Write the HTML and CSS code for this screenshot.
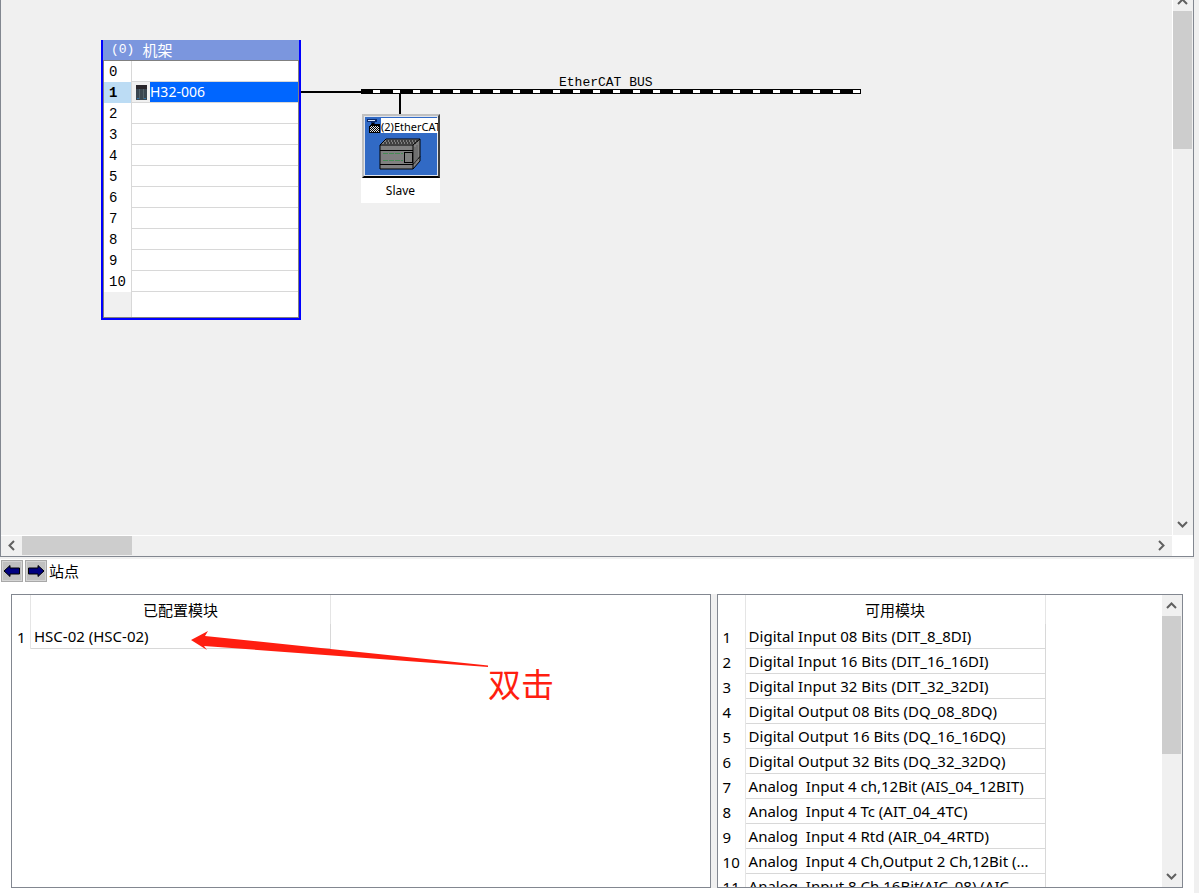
FILE: index.html
```
<!DOCTYPE html>
<html lang="zh-CN">
<head>
  <meta charset="UTF-8">
  <title>硬件配置</title>
  <meta name="viewport" content="width=device-width, initial-scale=1">
  <link rel="stylesheet" href="styles.css">
</head>
<body>
  <main class="window">
    <section class="workspace">
      <div class="canvas">
        <div class="rack">
          <div class="rack-title"><span class="mono">(0)</span><span>机架</span></div>
          <table class="slots">
            <tr><th>0</th><td></td></tr>
            <tr class="selected">
              <th>1</th>
              <td>
                <div class="slot">
                  <svg class="module-icon" width="11" height="15" viewBox="0 0 11 15">
                    <rect width="11" height="15" fill="#3a4650"/>
                    <rect width="11" height="4" fill="#29252a"/>
                    <path d="M3.500 4v10M7.500 4v10" stroke="#53626a"/>
                    <path d="M1 13.500h2M8 13.500h2" stroke="#2f74a8"/>
                  </svg>
                  <span class="slot-name">H32-006</span>
                </div>
              </td>
            </tr>
            <tr><th>2</th><td></td></tr>
            <tr><th>3</th><td></td></tr>
            <tr><th>4</th><td></td></tr>
            <tr><th>5</th><td></td></tr>
            <tr><th>6</th><td></td></tr>
            <tr><th>7</th><td></td></tr>
            <tr><th>8</th><td></td></tr>
            <tr><th>9</th><td></td></tr>
            <tr><th>10</th><td></td></tr>
            <tr class="rest"><th></th><td></td></tr>
          </table>
        </div>

        <div class="wire"></div>
        <div class="bus-name mono">EtherCAT BUS</div>
        <div class="bus"></div>
        <div class="stem"></div>

        <div class="slave">
          <div class="slave-box">
            <div class="slave-caption">
              <svg width="15" height="15" viewBox="0 0 15 15" shape-rendering="crispEdges">
                <rect width="15" height="15" fill="#316ac5"/>
                <path d="M1 1h10v3h-2v2H5V4H1z" fill="#0c2a6c"/>
                <path d="M2 2h7v1H2z" fill="#d8e4f8"/>
                <path d="M6 5h2v3H6z" fill="#000"/>
                <path d="M3 8l2-2h9v9H3z" fill="#000"/>
                <path d="M4 8h9v6H4z" fill="#e4e4e4"/>
                <path d="M4 8.500h9M5 9.500h8M4 10.500h9M5 11.500h8M4 12.500h9M5 13.500h8" stroke="#000" stroke-dasharray="1 1"/>
              </svg>
              <span>(2)EtherCAT</span>
            </div>
            <svg class="plc" width="42" height="32" viewBox="0 0 42 32">
              <path d="M1 7L7 1h34v22l-7 8H1z" fill="#808080" stroke="#000"/>
              <path d="M1 7h33v24M34 7l7-6M1 12.500h33M1 26.500h33l7-8" fill="none" stroke="#000"/>
              <path d="M7 3h32M5 5h32" stroke="#000" stroke-dasharray="2 1"/>
              <rect x="25.500" y="14.500" width="8" height="10" fill="#808080" stroke="#000"/>
              <path d="M4 15.500h20M4 22.500h20" stroke="#478c55" stroke-dasharray="5 1"/>
              <path d="M36 9v17M38 7v16" stroke="#5c5c5c"/>
            </svg>
          </div>
          <div class="slave-name">Slave</div>
        </div>
      </div>

      <div class="scroll-v scroll-canvas-v">
        <button class="arrow arrow-up" aria-label="向上"><svg width="11" height="7" viewBox="0 0 11 7"><path d="M1 6l4.500-4.500L10 6"/></svg></button>
        <div class="thumb"></div>
        <button class="arrow arrow-down" aria-label="向下"><svg width="11" height="7" viewBox="0 0 11 7"><path d="M1 1l4.500 4.500L10 1"/></svg></button>
      </div>
      <div class="scroll-h">
        <button class="arrow" aria-label="向左"><svg width="7" height="11" viewBox="0 0 7 11"><path d="M6 1L1.500 5.500L6 10"/></svg></button>
        <div class="thumb"></div>
        <button class="arrow arrow-right" aria-label="向右"><svg width="7" height="11" viewBox="0 0 7 11"><path d="M1 1l4.500 4.500L1 10"/></svg></button>
      </div>
    </section>

    <section class="station">
      <div class="toolbar">
        <button class="nav" aria-label="上一个"><svg width="18" height="14" viewBox="0 0 18 14"><path d="M1 7l6-5.500V4h9.500v6H7v2.500z" fill="#000080" stroke="#000"/></svg></button>
        <button class="nav" aria-label="下一个"><svg width="18" height="14" viewBox="0 0 18 14"><path d="M17 7l-6-5.500V4H1.500v6H11v2.500z" fill="#000080" stroke="#000"/></svg></button>
        <span class="toolbar-label">站点</span>
      </div>

      <div class="panels">
        <div class="panel configured">
          <table class="modules">
            <colgroup><col class="col-no-narrow"><col class="col-name"></colgroup>
            <thead><tr><th></th><th>已配置模块</th></tr></thead>
            <tbody><tr><th>1</th><td>HSC-02 (HSC-02)</td></tr></tbody>
          </table>
          <svg class="pointer" width="300" height="40" viewBox="0 0 300 40">
            <path d="M0 9L17 0L14 5L297 34.500V36L13 15L16 19z" fill="#ff1e10"/>
          </svg>
          <div class="note">双击</div>
        </div>

        <div class="panel available">
          <div class="list">
            <table class="modules">
              <colgroup><col class="col-no"><col class="col-name"></colgroup>
              <thead><tr><th></th><th>可用模块</th></tr></thead>
              <tbody>
                <tr><th>1</th><td>Digital Input 08 Bits (DIT_8_8DI)</td></tr>
                <tr><th>2</th><td>Digital Input 16 Bits (DIT_16_16DI)</td></tr>
                <tr><th>3</th><td>Digital Input 32 Bits (DIT_32_32DI)</td></tr>
                <tr><th>4</th><td>Digital Output 08 Bits (DQ_08_8DQ)</td></tr>
                <tr><th>5</th><td>Digital Output 16 Bits (DQ_16_16DQ)</td></tr>
                <tr><th>6</th><td>Digital Output 32 Bits (DQ_32_32DQ)</td></tr>
                <tr><th>7</th><td>Analog  Input 4 ch,12Bit (AIS_04_12BIT)</td></tr>
                <tr><th>8</th><td>Analog  Input 4 Tc (AIT_04_4TC)</td></tr>
                <tr><th>9</th><td>Analog  Input 4 Rtd (AIR_04_4RTD)</td></tr>
                <tr><th>10</th><td>Analog  Input 4 Ch,Output 2 Ch,12Bit (...</td></tr>
                <tr><th>11</th><td>Analog  Input 8 Ch,16Bit(AIC_08) (AIC...</td></tr>
              </tbody>
            </table>
          </div>
          <div class="scroll-v">
            <button class="arrow" aria-label="向上"><svg width="11" height="7" viewBox="0 0 11 7"><path d="M1 6l4.500-4.500L10 6"/></svg></button>
            <div class="thumb"></div>
            <button class="arrow arrow-down" aria-label="向下"><svg width="11" height="7" viewBox="0 0 11 7"><path d="M1 1l4.500 4.500L10 1"/></svg></button>
          </div>
        </div>
      </div>
    </section>
  </main>
</body>
</html>
```
FILE: styles.css
```
:root {
  --face: #f0f0f0;
  --line: #d8d8d8;
  --edge: #828790;
  --thumb: #cdcdcd;
  --font: "Noto Sans", "Noto Sans CJK SC", sans-serif;
  --mono: "Liberation Mono", "Noto Sans CJK SC", monospace;
}

* {
  box-sizing: border-box;
}

body {
  margin: 0;
  background: var(--face);
  color: #000;
  font-family: var(--font);
  font-size: 15px;
}

button {
  padding: 0;
  border: none;
  background: none;
}

svg {
  display: block;
}

.mono {
  font-family: var(--mono);
  font-size: 13px;
}

.window {
  display: grid;
  grid-template-rows: minmax(0, 557fr) minmax(0, 336fr);
  height: 100vh;
  margin-right: 5px;
  overflow: hidden;
}

/* hardware canvas */
.workspace {
  display: grid;
  grid-template-columns: 1fr 21px;
  grid-template-rows: 1fr 21px;
  border: 1px solid var(--edge);
  border-top: none;
  background: #fff;
}

.canvas {
  position: relative;
  overflow: hidden;
  background: var(--face);
}

.rack {
  position: absolute;
  left: 100px;
  top: 40px;
  width: 200px;
  border: 2px solid #0000ff;
  border-top: none;
}

.rack-title {
  display: flex;
  align-items: center;
  gap: 8px;
  height: 20px;
  padding-left: 8px;
  background: #7b96de;
  color: #fff;
  line-height: 20px;
}

.slots {
  width: 100%;
  table-layout: fixed;
  border-spacing: 0;
  border: 1px solid #808080;
  background: #fff;
}

.slots th,
.slots td {
  height: 21px;
  padding: 0;
}

.slots th {
  width: 28px;
  padding-left: 5px;
  border-right: 1px solid var(--line);
  font: 14px/20px var(--mono);
  text-align: left;
}

.slots td {
  border-bottom: 1px solid var(--line);
}

.slots .selected th {
  background: #bcdcf4;
  font-weight: bold;
}

.slots .rest th {
  height: 25px;
  background: var(--face);
}

.slots .rest td {
  border-bottom: none;
}

.slot {
  display: flex;
  align-items: center;
  height: 20px;
  padding-left: 4px;
  background: var(--face);
}

.slot-name {
  flex: 1;
  margin-left: 3px;
  background: #0066ff;
  color: #fff;
  font-size: 14px;
  line-height: 20px;
}

.wire {
  position: absolute;
  left: 300px;
  top: 91px;
  width: 60px;
  height: 2px;
  background: #000;
}

.bus-name {
  position: absolute;
  left: 558px;
  top: 75px;
  line-height: 16px;
}

.bus {
  position: absolute;
  left: 360px;
  top: 89px;
  width: 500px;
  height: 5px;
  border: solid #000;
  border-width: 1px 0;
  background: repeating-linear-gradient(90deg, #000 0 12px, #fff 12px 19px, #000 19px 20px);
}

.stem {
  position: absolute;
  left: 398px;
  top: 94px;
  width: 2px;
  height: 20px;
  background: #000;
}

.slave {
  position: absolute;
  left: 360px;
  top: 114px;
  width: 79px;
}

.slave-box {
  height: 64px;
  margin-left: 1px;
  padding: 2px 0 0 2px;
  border: 2px solid #c0c0c0;
  border-right-color: #404040;
  border-bottom-color: #000;
  background: #316ac5;
  box-shadow: inset 0 0 0 1px #e0e4ec;
}

.slave-caption {
  display: flex;
  height: 15px;
  overflow: hidden;
  background: #fff;
  font-size: 11px;
  line-height: 17px;
}

.slave-caption svg {
  flex: none;
}

.slave-caption span {
  flex: 1;
  overflow: hidden;
}

.plc {
  margin: 5px 0 0 13px;
}

.slave-name {
  height: 25px;
  background: #fff;
  font-size: 12px;
  line-height: 26px;
  text-align: center;
}

/* scroll bars */
.scroll-v {
  display: flex;
  flex-direction: column;
  width: 20px;
  background: var(--face);
}

.scroll-h {
  display: flex;
  height: 20px;
  margin-top: 1px;
  background: var(--face);
}

.thumb {
  background: var(--thumb);
}

.scroll-v .thumb {
  flex: 0 0 138px;
  width: 19px;
}

.scroll-h .thumb {
  flex: 0 0 110px;
  height: 19px;
}

.arrow {
  flex: none;
  display: flex;
  align-items: center;
  justify-content: center;
  width: 19px;
  height: 21px;
}

.arrow path {
  fill: none;
  stroke: #606060;
  stroke-width: 2;
}

.scroll-h .arrow {
  width: 21px;
  height: 19px;
}

.arrow-down {
  margin-top: auto;
}

.arrow-right {
  margin-left: auto;
}

.scroll-canvas-v {
  margin-left: 1px;
}

.arrow-up {
  height: 11px;
  align-items: flex-start;
  overflow: hidden;
}

.arrow-up svg {
  margin-top: -2px;
}

/* station area */
.station {
  display: flex;
  flex-direction: column;
  padding-bottom: 5px;
  border-top: 2px solid var(--face);
  background: #fff;
}

.toolbar {
  display: flex;
  gap: 2px;
  height: 35px;
  padding: 1px;
}

.nav {
  display: flex;
  align-items: center;
  justify-content: center;
  width: 22px;
  height: 22px;
  border: 1px solid #a8a8a8;
  background: #c0c0c0;
  box-shadow: inset 0 0 0 1px #d4d4d4;
}

.toolbar-label {
  line-height: 22px;
}

.panels {
  flex: 1;
  min-height: 0;
  display: flex;
  margin: 0 11px;
  background: var(--face);
}

.panel {
  border: 1px solid var(--edge);
  background: #fff;
}

.configured {
  position: relative;
  flex: 700 0 0;
  margin-right: 6px;
}

.available {
  flex: 466 0 0;
  display: flex;
  overflow: hidden;
}

.list {
  flex: 1;
  overflow: hidden;
}

.modules {
  table-layout: fixed;
  width: 0;
  border-spacing: 0;
}

.col-no-narrow {
  width: 19px;
}

.col-no {
  width: 28px;
}

.col-name {
  width: 300px;
}

.modules th,
.modules td {
  height: 25px;
  padding: 0;
  border-right: 1px solid var(--line);
  font-weight: normal;
  line-height: 24px;
  white-space: pre;
}

.modules thead th {
  height: 29px;
  border-color: #e5e5e5;
}

.modules tbody th {
  padding-left: 5px;
  border-color: #e5e5e5;
  text-align: left;
}

.modules td {
  padding-left: 3px;
  border-bottom: 1px solid var(--line);
}

/* annotation over the configured list */
.pointer {
  position: absolute;
  left: 179px;
  top: 36px;
}

.note {
  position: absolute;
  left: 476px;
  top: 70px;
  color: #ff1e10;
  font-size: 33px;
  line-height: 40px;
}
```
